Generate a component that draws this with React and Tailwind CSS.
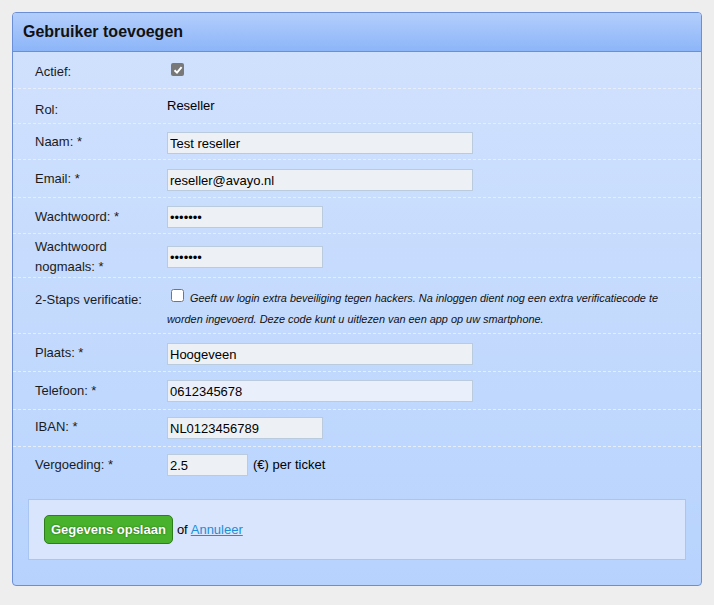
import React from "react";

const inputCls =
    "block h-[22px] border border-[#bacbdd] bg-[#edf1f5] px-[2px] py-0 text-[13px] text-black outline-none";

function Row({ label, h, lpt, vpt, last, children }) {
    return (
        <div
            className={
                "flex box-border " +
                (last ? "" : "border-b border-dashed border-[#e6eefc]")
            }
            style={{ height: h }}
        >
            <div
                className="w-[154px] shrink-0 pl-[22px] pr-[4px] leading-[20px] text-[13px] text-[#1b1b1b]"
                style={{ paddingTop: lpt }}
            >
                {label}
            </div>
            <div className="flex-1 pr-[10px]" style={{ paddingTop: vpt }}>
                {children}
            </div>
        </div>
    );
}

export default function App() {
    return (
        <div className="min-h-screen bg-[#eeeeee] p-[12px] font-['Liberation_Sans',Arial,sans-serif]">
            <div className="h-[574px] rounded-[4px] border border-[#6b8fd6] bg-gradient-to-b from-[#d2e2fd] to-[#b7d3fd] overflow-hidden">
                <div className="h-[39px] border-b border-[#6b8fd6] bg-gradient-to-b from-[#b3cefc] to-[#8cb5f8] pl-[10px] text-[16px] font-bold leading-[38px] text-[#111]">
                    Gebruiker toevoegen
                </div>

                <Row label="Actief:" h={37} lpt={10} vpt={11}>
                    <span className="ml-[4px] flex h-[13px] w-[13px] items-center justify-center rounded-[2px] bg-[#787878]">
                        <svg width="10" height="10" viewBox="0 0 10 10">
                            <path
                                d="M1.5 5.2 L4 7.6 L8.6 2.2"
                                fill="none"
                                stroke="#fff"
                                strokeWidth="2"
                            />
                        </svg>
                    </span>
                </Row>

                <Row label="Rol:" h={35} lpt={11} vpt={7}>
                    <div className="leading-[20px] text-[13px] text-black">Reseller</div>
                </Row>

                <Row label="Naam: *" h={36} lpt={8} vpt={8}>
                    <input className={inputCls + " w-[306px]"} defaultValue="Test reseller" />
                </Row>

                <Row label="Email: *" h={38} lpt={9} vpt={9}>
                    <input className={inputCls + " w-[306px]"} defaultValue="reseller@avayo.nl" />
                </Row>

                <Row label="Wachtwoord: *" h={36} lpt={9} vpt={8}>
                    <input type="password" className={inputCls + " w-[156px]"} defaultValue="1234567" />
                </Row>

                <Row label="Wachtwoord nogmaals: *" h={44} lpt={3} vpt={12}>
                    <input type="password" className={inputCls + " w-[156px]"} defaultValue="1234567" />
                </Row>

                <Row label="2-Staps verificatie:" h={56} lpt={12} vpt={10}>
                    <div className="text-[10.9px] italic leading-[21px] text-[#111]">
                        <input type="checkbox" className="ml-[4px] mr-[3px] align-[0px]" />{" "}
                        Geeft uw login extra beveiliging tegen hackers. Na inloggen dient nog
                        een extra verificatiecode te worden ingevoerd. Deze code kunt u
                        uitlezen van een app op uw smartphone.
                    </div>
                </Row>

                <Row label="Plaats: *" h={38} lpt={9} vpt={9}>
                    <input className={inputCls + " w-[306px]"} defaultValue="Hoogeveen" />
                </Row>

                <Row label="Telefoon: *" h={38} lpt={9} vpt={8}>
                    <input
                        className="block h-[22px] w-[306px] border border-[#bacbdd] bg-[#e9f0fb] px-[2px] py-0 text-[13px] text-black outline-none"
                        defaultValue="0612345678"
                    />
                </Row>

                <Row label="IBAN: *" h={37} lpt={7} vpt={7}>
                    <input className={inputCls + " w-[156px]"} defaultValue="NL0123456789" />
                </Row>

                <Row label="Vergoeding: *" h={38} lpt={8} vpt={7} last>
                    <div className="flex items-center text-[13px] text-black">
                        <input className={inputCls + " w-[81px]"} defaultValue="2.5" />
                        <span className="ml-[5px]">(€) per ticket</span>
                    </div>
                </Row>

                <div className="mx-[15px] mt-[14px] flex h-[61px] items-center border border-[#a9c5f2] bg-[#d9e5fc] pl-[15px] text-[13px] text-black">
                    <button className="h-[29px] rounded-[5px] border border-[#2e7d1d] bg-[#48b22c] px-[6px] font-bold text-white [text-shadow:0_0_2px_#1d5a10]">
                        Gegevens opslaan
                    </button>
                    <span className="ml-[4px]">of</span>
                    <a href="#" className="ml-[3px] text-[#1a8ed8] underline">
                        Annuleer
                    </a>
                </div>
            </div>
        </div>
    );
}
